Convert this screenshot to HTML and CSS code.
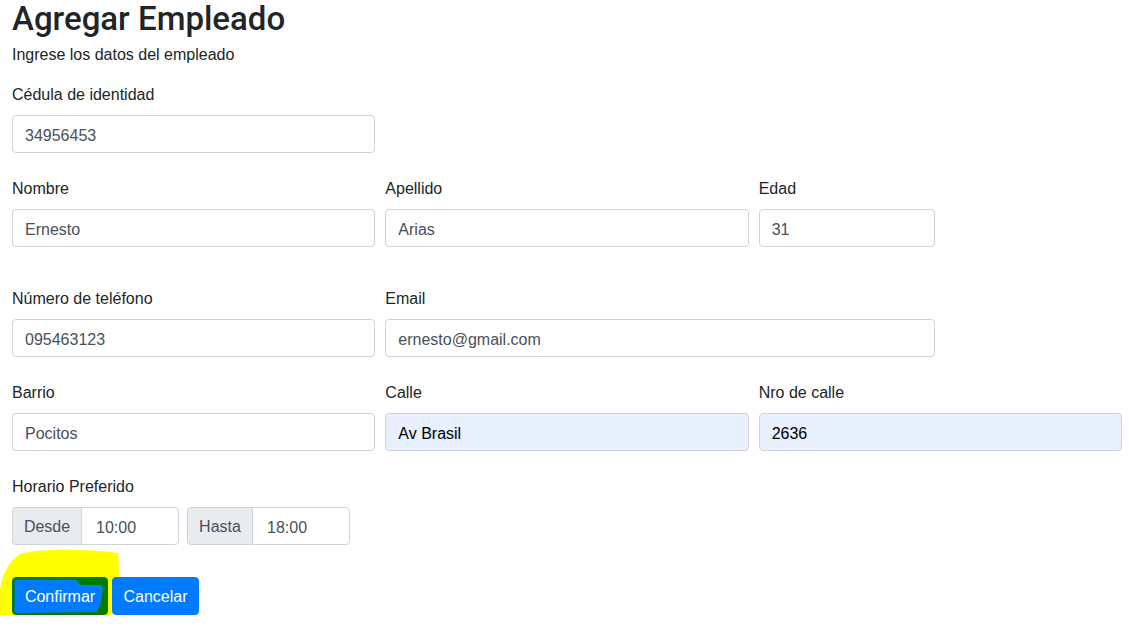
FILE: index.html
```html
<!DOCTYPE html>
<html lang="es">
<head>
<meta charset="utf-8">
<title>Agregar Empleado</title>
<link rel="stylesheet" href="styles.css">
</head>
<body>
<main class="page">
  <h2 class="title">Agregar Empleado</h2>
  <p class="subtitle">Ingrese los datos del empleado</p>
  <form class="form">
    <div class="row">
      <div class="group span-4">
        <label class="label">Cédula de identidad</label>
        <input class="input" type="text" value="34956453">
      </div>
    </div>
    <div class="row row-spaced">
      <div class="group span-4">
        <label class="label">Nombre</label>
        <input class="input" type="text" value="Ernesto">
      </div>
      <div class="group span-4">
        <label class="label">Apellido</label>
        <input class="input" type="text" value="Arias">
      </div>
      <div class="group span-2">
        <label class="label">Edad</label>
        <input class="input" type="text" value="31">
      </div>
    </div>
    <div class="row">
      <div class="group span-4">
        <label class="label">Número de teléfono</label>
        <input class="input" type="text" value="095463123">
      </div>
      <div class="group span-6">
        <label class="label">Email</label>
        <input class="input" type="text" value="ernesto@gmail.com">
      </div>
    </div>
    <div class="row">
      <div class="group span-4">
        <label class="label">Barrio</label>
        <input class="input" type="text" value="Pocitos">
      </div>
      <div class="group span-4">
        <label class="label">Calle</label>
        <input class="input autofill" type="text" value="Av Brasil">
      </div>
      <div class="group span-4">
        <label class="label">Nro de calle</label>
        <input class="input autofill" type="text" value="2636">
      </div>
    </div>
    <div class="group">
      <label class="label">Horario Preferido</label>
      <div class="times">
        <div class="input-group">
          <span class="addon addon-desde">Desde</span>
          <input class="input time" type="text" value="10:00">
        </div>
        <div class="input-group">
          <span class="addon addon-hasta">Hasta</span>
          <input class="input time" type="text" value="18:00">
        </div>
      </div>
    </div>
    <div class="actions">
      <svg class="highlight" width="130" height="88" viewBox="0 0 130 88" aria-hidden="true">
        <path d="M20 9 C35 4 80 3 118 8 L119 30 C118 50 113 70 108 80 C90 85 60 87 35 86 C15 85 3 83 0 81 L0 45 C2 30 8 17 20 9 Z" fill="#ffff00"/>
      </svg>
      <button type="button" class="btn btn-marked">
        <svg class="btn-fill" width="96" height="38" viewBox="0 0 96 38" aria-hidden="true">
          <path d="M4 2.5 L64 2.5 C66 6 68 8 72 8 L89 8 C91 10 91 14 90 18 C89 26 87 31 84 35 L4 36 C3 36 2.5 35 2.5 34 L2.5 4 C2.5 3 3 2.5 4 2.5 Z" fill="#007bff"/>
        </svg>
        <span class="btn-text">Confirmar</span>
      </button>
      <button type="button" class="btn btn-cancel">Cancelar</button>
    </div>
  </form>
</main>
</body>
</html>
```
FILE: styles.css
```css
html, body {
  margin: 0;
  padding: 0;
  background: #ffffff;
}

body {
  font-family: "Liberation Sans", Arial, sans-serif;
  font-size: 16px;
  line-height: 1.5;
  color: #212529;
}

.page {
  width: 1110px;
  margin-left: 12px;
}

.title {
  margin: 0;
  font-family: Roboto, "Liberation Sans", Arial, sans-serif;
  font-size: 33px;
  font-weight: 500;
  line-height: 38px;
  color: #212529;
}

.subtitle {
  margin: 5px 0 16px;
  font-size: 16px;
  line-height: 24px;
}

.form {
  margin: 0;
}

.row {
  display: grid;
  grid-template-columns: repeat(12, 1fr);
  column-gap: 10px;
}

.row-spaced {
  margin-bottom: 16px;
}

.group {
  display: flex;
  flex-direction: column;
  margin-bottom: 24px;
}

.span-2 { grid-column: span 2; }
.span-4 { grid-column: span 4; }
.span-6 { grid-column: span 6; }

.label {
  display: block;
  margin-bottom: 8px;
  line-height: 24px;
}

.input {
  box-sizing: border-box;
  width: 100%;
  height: 38px;
  padding: 8px 12px 4px;
  font-family: inherit;
  font-size: 16px;
  line-height: 24px;
  color: #495057;
  background: #ffffff;
  border: 1px solid #ced4da;
  border-radius: 4px;
  outline: none;
}

.autofill {
  background: #e8f0fe;
  color: #000000;
}

.times {
  display: flex;
  gap: 8px;
}

.input-group {
  display: flex;
}

.addon {
  box-sizing: border-box;
  height: 38px;
  padding-top: 2px;
  display: flex;
  align-items: center;
  justify-content: center;
  color: #495057;
  background: #e9ecef;
  border: 1px solid #ced4da;
  border-radius: 4px 0 0 4px;
  line-height: 24px;
}

.addon-desde { width: 70px; }
.addon-hasta { width: 66px; }

.time {
  width: 98px;
  margin-left: -1px;
  padding-left: 14px;
  border-radius: 0 4px 4px 0;
}

.actions {
  position: relative;
  display: flex;
  gap: 4px;
  margin-top: 32px;
}

.highlight {
  position: absolute;
  left: -12px;
  top: -32px;
  z-index: 0;
}

.btn {
  position: relative;
  z-index: 1;
  box-sizing: border-box;
  height: 38px;
  padding: 7px 0 5px;
  font-family: inherit;
  font-size: 16px;
  line-height: 24px;
  text-align: center;
  color: #ffffff;
  background: #007bff;
  border: 1px solid #007bff;
  border-radius: 4px;
}

.btn-marked {
  width: 96px;
  background: #007b00;
  border-color: #007b00;
  overflow: hidden;
}

.btn-cancel {
  width: 87px;
}

.btn-fill {
  position: absolute;
  left: -1px;
  top: -1px;
}

.btn-text {
  position: relative;
}
```
